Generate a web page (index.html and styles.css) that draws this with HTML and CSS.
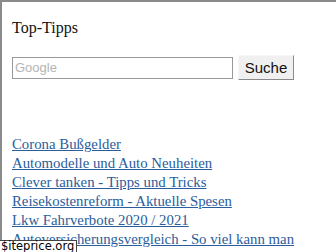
FILE: index.html
```html
<!DOCTYPE html>
<html lang="de">
<head>
    <meta charset="UTF-8">
    <title>Top-Tipps</title>
    <link rel="stylesheet" href="styles.css">
</head>
<body>
    <div class="frame">
        <div class="title">Top-Tipps</div>

        <form class="search">
            <input type="text" class="search-input" placeholder="Google">
            <button type="button" class="search-button">Suche</button>
        </form>

        <div class="links">
            <a href="#">Corona Bußgelder</a>
            <a href="#">Automodelle und Auto Neuheiten</a>
            <a href="#">Clever tanken - Tipps und Tricks</a>
            <a href="#">Reisekostenreform - Aktuelle Spesen</a>
            <a href="#">Lkw Fahrverbote 2020 / 2021</a>
            <a href="#">Autoversicherungsvergleich - So viel kann man</a>
        </div>
    </div>

    <div class="watermark">$iteprice.org</div>
</body>
</html>
```

FILE: styles.css
```css
* {
    box-sizing: border-box;
    margin: 0;
    padding: 0;
}

body {
    font-family: "Liberation Serif", "Times New Roman", serif;
    font-size: 16px;
    background-color: white;
    height: 252px;
    overflow: hidden;
}

.frame {
    border-top: 2px solid #8a8a8a;
    border-left: 2px solid #8a8a8a;
    height: 100%;
    padding: 17px 0 0 10px;
    display: flex;
    flex-direction: column;
}

.title {
    color: #111;
    line-height: 18px;
}

.search {
    display: flex;
    align-items: center;
    gap: 5px;
    margin-top: 18px;
}

.search-input {
    width: 221px;
    height: 22px;
    border: 1px solid #999;
    padding: 0 2px;
    font-family: "Liberation Sans", Arial, sans-serif;
    font-size: 13px;
    outline: none;
}

.search-input::placeholder {
    color: #b4b4b4;
}

.search-button {
    width: 56px;
    height: 25px;
    background-color: #f0f0f0;
    border: 1px solid;
    border-color: #f8f8f8 #8a8a8a #8a8a8a #f8f8f8;
    font-family: "Liberation Sans", Arial, sans-serif;
    font-size: 15px;
    color: #111;
}

.links {
    display: flex;
    flex-direction: column;
    align-items: flex-start;
    margin-top: 55px;
}

.links a {
    color: #2a5d9b;
    font-size: 14.8px;
    line-height: 19px;
    white-space: nowrap;
}

.watermark {
    position: absolute;
    left: 0;
    bottom: 0;
    width: 77px;
    height: 12px;
    background-color: white;
    border-top: 1px solid #444;
    border-right: 1px solid #444;
    font-family: "DejaVu Sans", sans-serif;
    font-size: 11.5px;
    line-height: 11px;
    padding-left: 1px;
    color: #000;
}
```
